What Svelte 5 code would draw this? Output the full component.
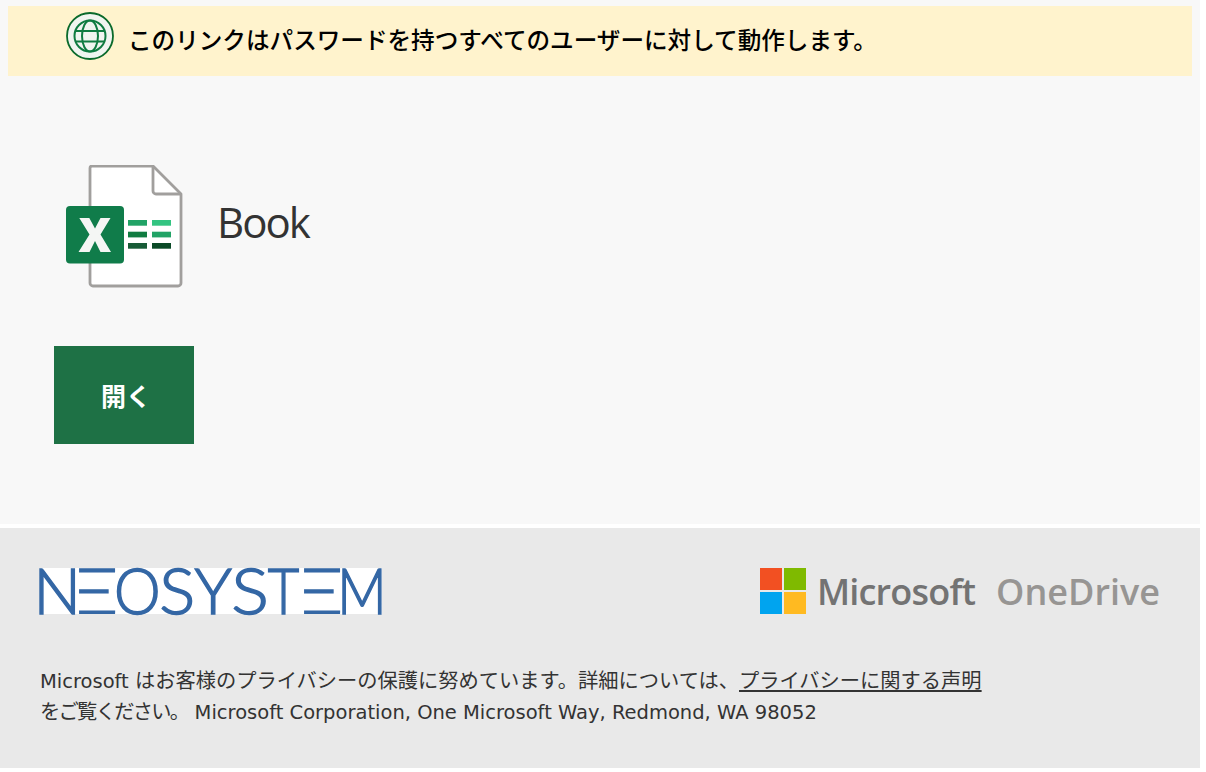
<script>
    const bars = [
        { x: 128, y: 220, fill: "#21a366" },
        { x: 152, y: 220, fill: "#33c481" },
        { x: 128, y: 231.7, fill: "#107c41" },
        { x: 152, y: 231.7, fill: "#21a366" },
        { x: 128, y: 243, fill: "#185c37" },
        { x: 152, y: 243, fill: "#0b4a27" },
    ];

    // wordmark letters: cell width and horizontal stretch
    const letters = [
        { c: "N", w: 35, sx: 0.98 },
        { c: "E", w: 30, sx: 1.6, bar: true },
        { c: "O", w: 65, sx: 0.92 },
        { c: "S", w: 15, sx: 1.05 },
        { c: "Y", w: 56, sx: 0.98 },
        { c: "S", w: 18, sx: 1.1 },
        { c: "T", w: 50, sx: 0.85 },
        { c: "E", w: 12, sx: 1.6, bar: true },
        { c: "M", w: 82, sx: 0.85 },
    ];
</script>

<main>
    <section class="card">
        <div class="banner">
            <svg class="globe" width="48" height="48" viewBox="66 12 48 48" aria-hidden="true">
                <circle cx="90" cy="36" r="23" fill="#f1f5f0" stroke="#0b6a2b" stroke-width="1.8" />
                <g fill="none" stroke="#107c41" stroke-width="2">
                    <circle cx="90" cy="36" r="15.5" />
                    <ellipse cx="90" cy="36" rx="8" ry="15.5" />
                    <path d="M76 31h28M76 41.5h28" />
                </g>
            </svg>
            <p>このリンクはパスワードを持つすべてのユーザーに対して動作します。</p>
        </div>

        <div class="file">
            <svg width="120" height="124" viewBox="64 165 120 124" aria-hidden="true">
                <path d="M92 166h61l28 28v89a3 3 0 0 1-3 3H93a3 3 0 0 1-3-3V168a2 2 0 0 1 2-2z" fill="#fff" stroke="#a19f9d" stroke-width="2.8" stroke-linejoin="round" />
                <path d="M153 166v25a3 3 0 0 0 3 3h25" fill="none" stroke="#a19f9d" stroke-width="2.8" stroke-linejoin="round" />
                <rect x="66" y="206" width="58" height="57.5" rx="4" fill="#107c4a" />
                <path d="M79.3 218h10L95 228.5 100.5 218h10L100.5 234.5 111 252h-10.5L95 241 89.5 252H78.5L89.5 234.5z" fill="#f4f6f4" />
                {#each bars as bar}
                    <rect x={bar.x} y={bar.y} width="19" height="5.7" fill={bar.fill} />
                {/each}
            </svg>
            <h1>Book</h1>
        </div>

        <button>開く</button>
    </section>

    <footer>
        <div class="logos">
            <div class="neo">
                {#each letters as l}
                    <span class="cell" style="width: {l.w}px"><span class="glyph" class:bar={l.bar} style="transform: scaleX({l.sx})">{l.c}</span></span>
                {/each}
            </div>
            <div class="ms">
                <svg width="46" height="46" viewBox="0 0 46 46" aria-hidden="true">
                    <rect width="22" height="22" fill="#f25022" />
                    <rect x="24" width="22" height="22" fill="#7fba00" />
                    <rect y="24" width="22" height="22" fill="#00a4ef" />
                    <rect x="24" y="24" width="22" height="22" fill="#ffba21" />
                </svg>
                <span class="microsoft">Microsoft</span>
                <span class="onedrive">OneDrive</span>
            </div>
        </div>
        <p class="legal">
            Microsoft <span class="ja">はお客様のプライバシーの保護に努めています。詳細については、<a href="#privacy">プライバシーに関する声明</a></span><br />
            <span class="ja tight">をご覧ください。</span> Microsoft Corporation, One Microsoft Way, Redmond, WA 98052
        </p>
    </footer>
</main>

<style>
    :global(body) {
        background: #fff;
    }
    main {
        width: 1200px;
        font-family: Tahoma, "DejaVu Sans", "Noto Sans CJK JP", sans-serif;
    }
    .card {
        height: 524px;
        box-sizing: border-box;
        padding-top: 6px;
        background: #f8f8f8;
        display: flex;
        flex-direction: column;
    }
    .banner {
        height: 70px;
        margin: 0 8px;
        padding-left: 58px;
        background: #fff3cd;
        display: flex;
        align-items: flex-start;
        gap: 14px;
    }
    .globe {
        margin-top: 6px;
    }
    .banner p {
        margin: 13px 0 0;
        font-family: "Noto Sans CJK JP", sans-serif;
        font-size: 23.6px;
        font-weight: 500;
        line-height: 40px;
        height: 40px;
        color: #000;
    }
    .file {
        margin: 89px 0 0 64px;
        display: flex;
        align-items: flex-start;
        gap: 34px;
    }
    h1 {
        margin: 27px 0 0 -1px;
        font-family: "Open Sans", sans-serif;
        font-size: 42px;
        font-weight: 400;
        line-height: 60px;
        letter-spacing: -2px;
        color: #333;
    }
    button {
        width: 140px;
        height: 98px;
        margin: 57px 0 0 54px;
        padding: 0 0 0 4px;
        border: 0;
        background: #1e7145;
        color: #fff;
        font-family: "Noto Sans CJK JP", sans-serif;
        font-size: 25px;
        font-weight: 700;
    }
    footer {
        height: 240px;
        box-sizing: border-box;
        margin-top: 4px;
        padding: 40px 40px 0;
        background: #e9e9e9;
    }
    .logos {
        display: flex;
        justify-content: space-between;
        align-items: flex-start;
    }
    .neo {
        width: 342px;
        height: 46px;
        background: #fff;
        color: #3467a5;
        font-family: "Lato", sans-serif;
        font-size: 64px;
        font-weight: 300;
        -webkit-text-stroke: 1.5px #3467a5;
        line-height: 43px;
        white-space: nowrap;
        display: flex;
    }
    .cell {
        display: flex;
        justify-content: center;
        flex: none;
        height: 46px;
    }
    .glyph {
        display: block;
        flex: none;
    }
    .bar {
        clip-path: inset(0 0 0 12px);
    }
    .ms {
        display: flex;
        align-items: center;
        height: 46px;
    }
    .microsoft,
    .onedrive {
        font-family: "Open Sans", sans-serif;
        font-size: 36px;
        font-weight: 600;
    }
    .microsoft {
        margin-left: 11px;
        color: #737373;
        letter-spacing: -0.8px;
    }
    .onedrive {
        margin-left: 21px;
        color: #979593;
    }
    .legal {
        margin: 52px 0 0;
        font-size: 19.5px;
        line-height: 31px;
        color: #333;
    }
    .ja {
        font-size: 20.25px;
        line-height: 1;
    }
    .tight {
        letter-spacing: -1.7px;
    }
    .legal a {
        color: #333;
        text-decoration: underline;
    }
</style>
